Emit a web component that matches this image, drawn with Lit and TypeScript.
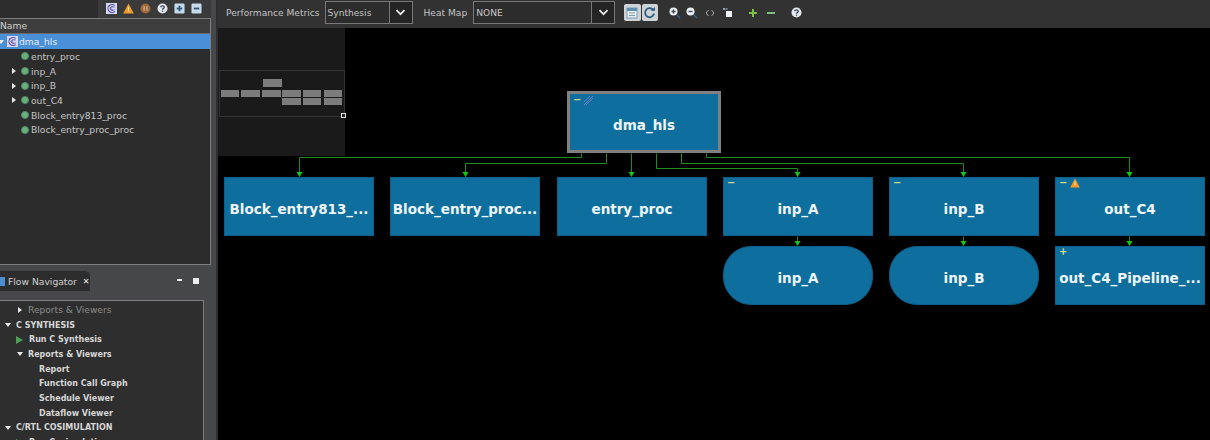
import { LitElement, html, css, svg } from 'lit';
import { customElement } from 'lit/decorators.js';

const designIcon = (size: number) => html`
  <svg width=${size} height=${size} viewBox="0 0 12 12">
    <rect width="12" height="12" fill="#d5dbf4"></rect>
    <path d="M9.500 2.500C6 .5 2 2.500 2 6s4 5.500 7.500 3.500M9.500 4.500C7 3.500 4.500 4.500 4.500 6S7 8.500 9.500 7.500" fill="none" stroke="#5a4bb0" stroke-width="1.100"></path>
    <path d="M2 2l8 8" stroke="#8f86d6" stroke-width=".7"></path>
  </svg>`;

const warnIcon = (size: number) => html`
  <svg width=${size} height=${size} viewBox="0 0 12 12">
    <path d="M6 .5 11.800 11.500H.2Z" fill="#f09a2c"></path>
    <path d="M5.500 4h1v4.500h-1ZM5.500 9.200h1v1h-1Z" fill="#ffe2b0"></path>
  </svg>`;

const helpIcon = html`
  <svg width="11" height="11" viewBox="0 0 12 12">
    <circle cx="6" cy="6" r="5.500" fill="#e4e8ee"></circle>
    <path d="M4 4.600C4 2.600 8 2.600 8 4.600 8 6 6 5.800 6 7.400" fill="none" stroke="#3a4a60" stroke-width="1.400"></path>
    <rect x="5.300" y="8.300" width="1.400" height="1.400" fill="#3a4a60"></rect>
  </svg>`;

const boxIcon = (minus: boolean) => html`
  <svg width="11" height="11" viewBox="0 0 12 12">
    <rect x=".5" y=".5" width="11" height="11" rx="1.500" fill="#c6dcec"></rect>
    <rect x="3" y="5" width="6" height="2" fill="#35587a"></rect>
    ${minus ? null : svg`<rect x="5" y="3" width="2" height="6" fill="#35587a"></rect>`}
  </svg>`;

const magnifier = (plus: boolean) => html`
  <svg width="12" height="12" viewBox="0 0 12 12">
    <circle cx="4.500" cy="4.500" r="4" fill="#e8edf2"></circle>
    <rect x="2.500" y="3.800" width="4" height="1.400" fill="#3c4a5c"></rect>
    ${plus ? svg`<rect x="3.800" y="2.500" width="1.400" height="4" fill="#3c4a5c"></rect>` : null}
    <path d="M8 8l3 3" stroke="#35618a" stroke-width="1.500"></path>
  </svg>`;

interface TreeRow { label: string; expand?: boolean }
const treeRows: TreeRow[] = [
  { label: 'entry_proc' },
  { label: 'inp_A', expand: true },
  { label: 'inp_B', expand: true },
  { label: 'out_C4', expand: true },
  { label: 'Block_entry813_proc' },
  { label: 'Block_entry_proc_proc' },
];

interface FlowRow { label: string; level: string; arrow?: 'open' | 'closed' | 'play'; dim?: boolean }
const flowRows: FlowRow[] = [
  { label: 'Reports & Viewers', level: 'l1', arrow: 'closed', dim: true },
  { label: 'C SYNTHESIS', level: 'l0', arrow: 'open' },
  { label: 'Run C Synthesis', level: 'l1', arrow: 'play' },
  { label: 'Reports & Viewers', level: 'l1', arrow: 'open' },
  { label: 'Report', level: 'l2' },
  { label: 'Function Call Graph', level: 'l2' },
  { label: 'Schedule Viewer', level: 'l2' },
  { label: 'Dataflow Viewer', level: 'l2' },
  { label: 'C/RTL COSIMULATION', level: 'l0', arrow: 'open' },
  { label: 'Run Cosimulation', level: 'l1', arrow: 'play' },
];

// canvas coordinates are page coordinates minus the canvas origin (218, 28)
interface GraphNode { label: string; x: number; y: number; pill?: boolean; mark?: string; warn?: boolean }
const nodes: GraphNode[] = [
  { label: 'Block_entry813_...', x: 6, y: 149 },
  { label: 'Block_entry_proc...', x: 172, y: 149 },
  { label: 'entry_proc', x: 339, y: 149 },
  { label: 'inp_A', x: 505, y: 149, mark: '−' },
  { label: 'inp_B', x: 671, y: 149, mark: '−' },
  { label: 'out_C4', x: 837, y: 149, mark: '−', warn: true },
  { label: 'inp_A', x: 505, y: 218, pill: true },
  { label: 'inp_B', x: 671, y: 218, pill: true },
  { label: 'out_C4_Pipeline_...', x: 837, y: 218, mark: '+' },
];

const wires = [
  'M363 125V129H81V146',
  'M388 125V135H247V146',
  'M413 125V146',
  'M438 125V140H579V146',
  'M463 125V135H745V146',
  'M488 125V129H911V146',
  'M579 208V216',
  'M745 208V216',
  'M911 208V216',
];
const arrowTips = [81, 247, 413, 579, 745, 911];
const lowerTips = [579, 745, 911];

const miniBoxes = [
  [45, 9, 19, 8],
  [3, 20, 18, 7], [23, 20, 19, 7], [44, 20, 19, 7], [64, 20, 19, 7], [85, 20, 18, 7], [106, 20, 18, 7],
  [64, 28, 19, 7], [85, 28, 18, 7], [106, 28, 18, 7],
];

@customElement('app-root')
export class AppRoot extends LitElement {
  static styles = css`
    :host {
      display: flex;
      width: 1210px;
      height: 440px;
      overflow: hidden;
      background: #000;
      font-family: "DejaVu Sans", sans-serif;
      color: #c9c9c9;
    }

    .side {
      width: 218px;
      flex: none;
      display: flex;
      flex-direction: column;
      background: #454748;
      border-right: 2px solid #2e2e2e;
      box-sizing: border-box;
    }
    .side-bar {
      height: 18px;
      flex: none;
      display: flex;
      align-items: center;
      justify-content: flex-end;
      gap: 6px;
      padding: 0 9px 2px 98px;
      background: linear-gradient(90deg, #2d2d2d 98px, #3a3a3a 98px);
      width: 211px;
      box-sizing: border-box;
    }
    .tree {
      width: 211px;
      height: 247px;
      flex: none;
      box-sizing: border-box;
      border: 1px solid #7d7d7d;
      border-left: none;
      background: #2c2c2c;
      font-size: 9.200px;
      overflow: hidden;
    }
    .tree-head {
      height: 15px;
      box-sizing: border-box;
      line-height: 14px;
      background: #3e3e3e;
      border-bottom: 1px solid #6a6a6a;
      color: #cfcfcf;
    }
    .tree-root {
      height: 15px;
      display: flex;
      align-items: center;
      background: #4a90d9;
      color: #e6eefa;
    }
    .tree-root .expander {
      width: 7px;
      margin: 0 3px 0 -3px;
    }
    .tree-root svg { margin-right: 1px; }
    .tree-row {
      height: 14.700px;
      display: flex;
      align-items: center;
      padding-left: 8px;
      color: #c4c4c4;
    }
    .expander {
      width: 11px;
      flex: none;
      display: flex;
      justify-content: center;
    }
    .tri-right {
      width: 0;
      height: 0;
      border-left: 4px solid #e8e8e8;
      border-top: 3.500px solid transparent;
      border-bottom: 3.500px solid transparent;
    }
    .tri-down {
      width: 0;
      height: 0;
      border-top: 4px solid #e8e8e8;
      border-left: 3.500px solid transparent;
      border-right: 3.500px solid transparent;
    }
    .dot {
      width: 6px;
      height: 6px;
      border-radius: 50%;
      background: #69b07e;
      border: .5px solid #4f8a62;
      margin: 0 2px;
      flex: none;
    }

    .nav {
      flex: 1;
      min-height: 0;
      display: flex;
      flex-direction: column;
      padding-top: 6px;
      width: 211px;
    }
    .nav-head {
      height: 20px;
      flex: none;
      display: flex;
      align-items: center;
      justify-content: space-between;
      padding-right: 12px;
    }
    .nav-tab {
      height: 20px;
      width: 90px;
      flex: none;
      box-sizing: border-box;
      display: flex;
      align-items: center;
      gap: 3px;
      background: #2d2d2d;
      border-radius: 0 5px 0 0;
      font-size: 9.200px;
      color: #cfcfcf;
      white-space: nowrap;
    }
    .nav-glyph {
      width: 5px;
      height: 9px;
      background: #4c8fd0;
      flex: none;
    }
    .nav-close {
      font-size: 8px;
      font-weight: bold;
      margin-left: 3px;
      color: #eee;
    }
    .nav-tools {
      display: flex;
      align-items: center;
      gap: 11px;
    }
    .nav-min {
      width: 5px;
      height: 2px;
      background: #eee;
      margin-bottom: 3px;
    }
    .nav-max {
      width: 6px;
      height: 6px;
      background: #eee;
    }
    .nav-body {
      flex: 1;
      margin-top: 9px;
      width: 204px;
      box-sizing: border-box;
      border: 1px solid #7d7d7d;
      border-left: none;
      border-bottom: none;
      background: #2e2e2e;
      padding-top: 2px;
      overflow: hidden;
      font-size: 8px;
      font-weight: bold;
      color: #d6d6d6;
    }
    .flow-row {
      height: 14.700px;
      display: flex;
      align-items: center;
      white-space: nowrap;
    }
    .flow-row .expander { margin-right: 3px; }
    .flow-row .expander.run { margin-right: 4px; }
    .l0 { padding-left: 2px; }
    .l1 { padding-left: 14px; }
    .l2 { padding-left: 39px; }
    .dim {
      color: #8c8c8c;
      font-weight: normal;
      font-size: 9.100px;
    }
    .play {
      width: 0;
      height: 0;
      border-left: 7px solid #4f9d5d;
      border-top: 4px solid transparent;
      border-bottom: 4px solid transparent;
    }

    .main {
      flex: 1;
      min-width: 0;
      display: flex;
      flex-direction: column;
    }
    .bar {
      height: 28px;
      flex: none;
      box-sizing: border-box;
      display: flex;
      align-items: center;
      background: #323232;
      padding: 0 0 3px 8px;
      font-size: 9.100px;
      color: #c4c4c4;
    }
    .select {
      height: 23px;
      box-sizing: border-box;
      display: flex;
      align-items: center;
      justify-content: space-between;
      border: 1px solid #787878;
      background: #2c2c2c;
      padding-left: 2px;
      margin: 0 11px 0 5px;
    }
    .select.metrics { width: 88px; }
    .select.heat {
      width: 142px;
      margin-left: 6px;
      margin-right: 9px;
    }
    .select-btn {
      width: 22px;
      height: 21px;
      flex: none;
      display: flex;
      align-items: center;
      justify-content: center;
      border-left: 1px solid #787878;
      background: #242424;
    }
    .cal {
      width: 16.500px;
      height: 17px;
      flex: none;
      background: #cdd3d6;
      display: flex;
      align-items: center;
      justify-content: center;
      border-radius: 2px;
    }
    .cal + .cal {
      margin-left: 1px;
      margin-right: 8px;
    }
    .tool {
      width: 17.500px;
      flex: none;
      display: flex;
      justify-content: center;
    }
    .tool.sp { margin-left: 8.500px; }

    .canvas {
      flex: 1;
      position: relative;
      background: #000;
      overflow: hidden;
    }
    .mini {
      position: absolute;
      left: 0;
      top: 0;
      width: 127px;
      height: 128px;
      background: #1a1a1a;
    }
    .mini-frame {
      position: absolute;
      left: 1px;
      top: 42px;
      width: 124px;
      height: 45px;
      border: 1px solid #333;
    }
    .mini-boxes {
      position: absolute;
      left: 0;
      top: 42px;
    }
    .mini-box {
      position: absolute;
      background: #7c7c7c;
    }
    .mini-handle {
      position: absolute;
      left: 123px;
      top: 85px;
      width: 3px;
      height: 3px;
      border: 1px solid #e0e0e0;
      background: #222;
    }
    .wires {
      position: absolute;
      left: 0;
      top: 0;
    }
    .node {
      position: absolute;
      width: 150px;
      height: 59px;
      box-sizing: border-box;
      display: flex;
      align-items: center;
      justify-content: center;
      background: #0e6f9e;
      border: 1px solid #0c5f88;
      color: #edf5fa;
      font-size: 13.500px;
      font-weight: bold;
      white-space: nowrap;
      padding-top: 4px;
    }
    .node.pill { border-radius: 28px; }
    .node.top {
      left: 349px;
      top: 63px;
      width: 154px;
      height: 62px;
      border: 3px solid #808080;
      padding-top: 6px;
    }
    .mark {
      position: absolute;
      left: 3px;
      top: -1px;
      display: flex;
      align-items: center;
      gap: 3px;
      font-size: 10px;
      line-height: 12px;
      color: #cfd98a;
    }
    .node.top .mark {
      left: 3px;
      top: 0;
    }
  `;

  private _chevron() {
    return html`<svg width="11" height="7" viewBox="0 0 11 7">
      <path d="M1.500 1.200 5.500 5.200 9.500 1.200" fill="none" stroke="#e8e8e8" stroke-width="1.800"></path>
    </svg>`;
  }

  private _flowRow(row: FlowRow) {
    let lead = null;
    if (row.arrow === 'open') lead = html`<span class="expander"><span class="tri-down"></span></span>`;
    if (row.arrow === 'closed') lead = html`<span class="expander"><span class="tri-right"></span></span>`;
    if (row.arrow === 'play') lead = html`<span class="expander run"><span class="play"></span></span>`;
    return html`<div class="flow-row ${row.level} ${row.dim ? 'dim' : ''}">${lead}${row.label}</div>`;
  }

  private _node(n: GraphNode) {
    return html`
      <div class="node ${n.pill ? 'pill' : ''}" style="left:${n.x}px;top:${n.y}px">
        ${n.mark ? html`<span class="mark">${n.mark}${n.warn ? warnIcon(10) : null}</span>` : null}
        ${n.label}
      </div>`;
  }

  render() {
    return html`
      <div class="side">
        <div class="side-bar">
          ${designIcon(11)}
          ${warnIcon(11)}
          <svg width="11" height="11" viewBox="0 0 12 12">
            <circle cx="6" cy="6" r="5.500" fill="#9a6a3c"></circle>
            <path d="M4.500 3.500v5M7.500 3.500v5" stroke="#d8b890" stroke-width="1.300"></path>
          </svg>
          ${helpIcon}
          ${boxIcon(false)}
          ${boxIcon(true)}
        </div>
        <div class="tree">
          <div class="tree-head">Name</div>
          <div class="tree-root">
            <span class="expander"><span class="tri-down"></span></span>
            ${designIcon(11)}
            <span>dma_hls</span>
          </div>
          ${treeRows.map(r => html`
            <div class="tree-row">
              <span class="expander">${r.expand ? html`<span class="tri-right"></span>` : null}</span>
              <span class="dot"></span>${r.label}
            </div>`)}
        </div>
        <div class="nav">
          <div class="nav-head">
            <div class="nav-tab">
              <span class="nav-glyph"></span>Flow Navigator<span class="nav-close">✕</span>
            </div>
            <div class="nav-tools"><span class="nav-min"></span><span class="nav-max"></span></div>
          </div>
          <div class="nav-body">${flowRows.map(r => this._flowRow(r))}</div>
        </div>
      </div>
      <div class="main">
        <div class="bar">
          <span>Performance Metrics</span>
          <div class="select metrics"><span>Synthesis</span><span class="select-btn">${this._chevron()}</span></div>
          <span>Heat Map</span>
          <div class="select heat"><span>NONE</span><span class="select-btn">${this._chevron()}</span></div>
          <span class="cal">
            <svg width="12" height="12" viewBox="0 0 12 12">
              <rect x="1" y="1" width="10" height="10" fill="#e8eef2" stroke="#7f9db5"></rect>
              <rect x="1" y="1" width="10" height="3" fill="#5b8fb5"></rect>
              <path d="M3 6h6M3 8.500h6" stroke="#7f9db5"></path>
            </svg>
          </span>
          <span class="cal">
            <svg width="13" height="13" viewBox="0 0 13 13">
              <path d="M10.500 4.500A4.500 4.500 0 1 0 11 7.500" fill="none" stroke="#2f5f80" stroke-width="1.800"></path>
              <path d="M8 4.800h4V1Z" fill="#2f5f80"></path>
            </svg>
          </span>
          <span class="tool">${magnifier(true)}</span>
          <span class="tool">${magnifier(false)}</span>
          <span class="tool">
            <svg width="10" height="8" viewBox="0 0 10 8">
              <path d="M3.500 1 1 4l2.500 3M6.500 1 9 4 6.500 7" fill="none" stroke="#a8a8a8" stroke-width="1"></path>
            </svg>
          </span>
          <span class="tool">
            <svg width="11" height="11" viewBox="0 0 11 11">
              <rect x="4" y="4" width="6" height="6" fill="#eef1f3"></rect>
              <rect x="1" y="1" width="2" height="2" fill="#8fa6b8"></rect>
              <rect x="3.500" y="1" width="2" height="2" fill="#6d8294"></rect>
            </svg>
          </span>
          <span class="tool sp">
            <svg width="10" height="10" viewBox="0 0 10 10"><path d="M4 1h2v3h3v2H6v3H4V6H1V4h3Z" fill="#7cc04a"></path></svg>
          </span>
          <span class="tool">
            <svg width="10" height="10" viewBox="0 0 10 10"><rect x="1" y="4" width="8" height="2" fill="#7cc07a"></rect></svg>
          </span>
          <span class="tool sp">${helpIcon}</span>
        </div>
        <div class="canvas">
          <div class="mini">
            <div class="mini-frame"></div>
            <div class="mini-boxes">
              ${miniBoxes.map(b => html`<div class="mini-box" style="left:${b[0]}px;top:${b[1]}px;width:${b[2]}px;height:${b[3]}px"></div>`)}
            </div>
            <div class="mini-handle"></div>
          </div>
          <svg class="wires" width="992" height="412">
            <g transform="translate(.5 .5)">
              ${wires.map(d => svg`<path d=${d} fill="none" stroke="#1c8c1c" stroke-width="1"></path>`)}
            </g>
            ${arrowTips.map(x => svg`<path d="M${x - 2.500} 144h6l-3 5Z" fill="#18c418"></path>`)}
            ${lowerTips.map(x => svg`<path d="M${x - 2.500} 213h6l-3 5Z" fill="#18c418"></path>`)}
          </svg>
          <div class="node top">
            <span class="mark">−
              <svg width="9" height="9" viewBox="0 0 9 9">
                <path d="M0 9 9 0M2 9l7-7M0 6l6-6" stroke="#6f7fc8" stroke-width="1"></path>
              </svg>
            </span>
            dma_hls
          </div>
          ${nodes.map(n => this._node(n))}
        </div>
      </div>
    `;
  }
}
